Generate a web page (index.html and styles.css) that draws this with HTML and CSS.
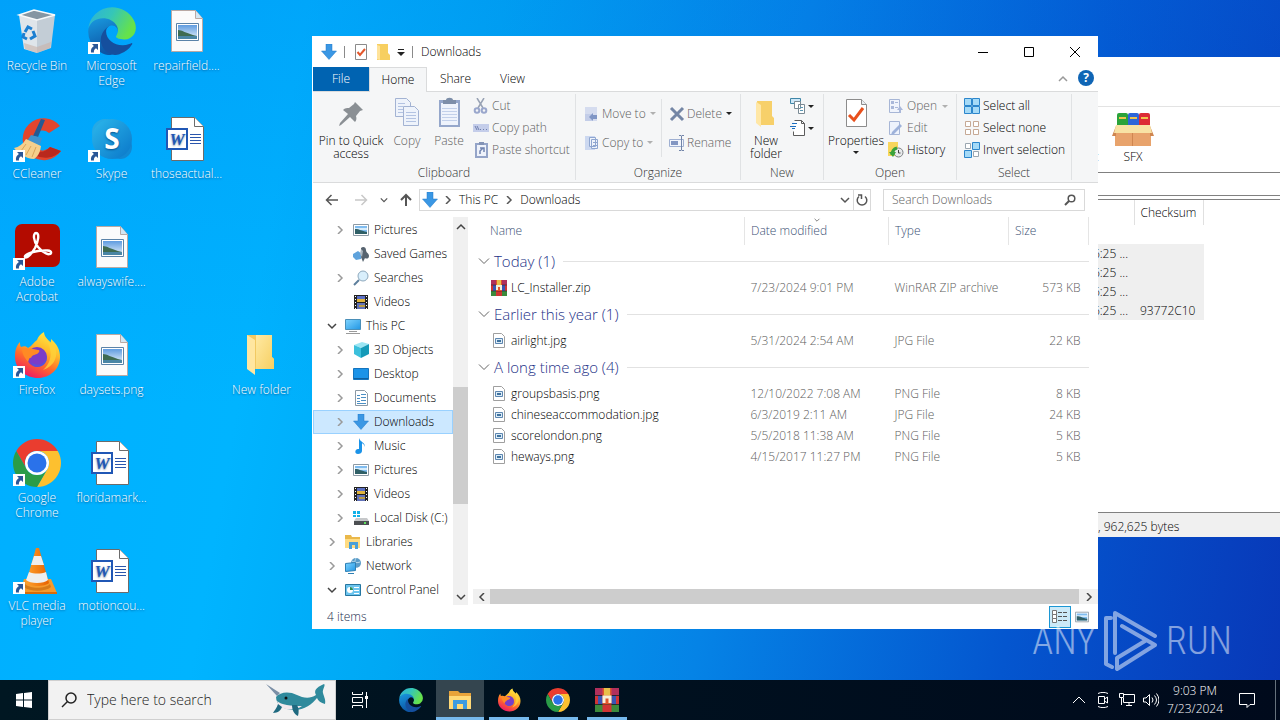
FILE: index.html
```html
<!DOCTYPE html>
<html lang="en">
<head>
    <meta charset="UTF-8">
    <meta name="viewport" content="width=device-width, initial-scale=1.0">
    <title>Downloads</title>
    <link rel="stylesheet" href="styles.css">
</head>
<body>
    <!-- Icon sprite -->
    <svg class="sprite" aria-hidden="true">
        <defs>
            <linearGradient id="gEdgeGreen" x1="0" y1="0" x2="1" y2="0.4">
                <stop offset="0" stop-color="#2bb0dd"/><stop offset=".5" stop-color="#35c6b8"/><stop offset="1" stop-color="#66e24a"/>
            </linearGradient>
            <linearGradient id="gEdgeBlue" x1="0" y1="0" x2="0.3" y2="1">
                <stop offset="0" stop-color="#1a9de2"/><stop offset="1" stop-color="#0c55a5"/>
            </linearGradient>
            <linearGradient id="gFox" x1="0.8" y1="0" x2="0.3" y2="1">
                <stop offset="0" stop-color="#fff14a"/><stop offset=".35" stop-color="#ffbd2b"/><stop offset=".65" stop-color="#ff6a2b"/><stop offset="1" stop-color="#ec1668"/>
            </linearGradient>
            <linearGradient id="gFolder" x1="0" y1="0" x2="1" y2="1">
                <stop offset="0" stop-color="#ffe9a2"/><stop offset="1" stop-color="#f6cf62"/>
            </linearGradient>
            <linearGradient id="gSkype" x1="0" y1="0" x2="1" y2="1">
                <stop offset="0" stop-color="#2cb8ec"/><stop offset="1" stop-color="#0a76c8"/>
            </linearGradient>
            <linearGradient id="gSky" x1="0" y1="0" x2="0" y2="1">
                <stop offset="0" stop-color="#5f9ce0"/><stop offset="1" stop-color="#e4f0fa"/>
            </linearGradient>
            <linearGradient id="gCone" x1="0" y1="0" x2="1" y2="0">
                <stop offset="0" stop-color="#ffa02c"/><stop offset="1" stop-color="#e76200"/>
            </linearGradient>
            <linearGradient id="gScreen" x1="0" y1="0" x2="1" y2="1">
                <stop offset="0" stop-color="#7fd4ff"/><stop offset="1" stop-color="#2196e4"/>
            </linearGradient>
        </defs>

        <symbol id="shortcut" viewBox="0 0 12 12">
            <path fill="#fff" d="M0 0h12v12H0z"/>
            <path fill="#2b5797" d="M4 2h6v6L8 6.200C6.500 7 5.500 8.500 6 10.500H3C2.500 7.500 3.800 5.500 5.900 4.100z"/>
        </symbol>

        <symbol id="recycle" viewBox="0 0 48 48">
            <path fill="#dfe5ea" d="M6 8l5 34 13 4V12z"/>
            <path fill="#c3cdd6" d="M24 12l18-4-4 33-14 5z"/>
            <path fill="#8596a3" d="M6 8l15-5 21 5-18 5z"/>
            <path fill="none" stroke="#f8fafb" stroke-width="1.500" d="M6 8l15-5 21 5-18 5z"/>
            <path fill="#c9b3a8" opacity=".6" d="M11 36l13 4 14-5-1 6-13 5-12-4z"/>
            <g fill="none" stroke="#1c7fd1" stroke-width="3">
                <path d="M12 25l3-5 4 2"/><path d="M20 24l2 5-5 3"/><path d="M14 32l-4-2 1-4"/>
            </g>
        </symbol>

        <symbol id="edge" viewBox="4 1 257 258">
            <path fill="#154f9e" d="M235.680 195.460a93.730 93.730 0 0 1-10.540 4.710 101.870 101.870 0 0 1-35.900 6.460c-47.320 0-88.540-32.550-88.540-74.320A31.480 31.480 0 0 1 117.130 105c-42.800 1.800-53.800 46.400-53.800 72.530 0 73.880 68.090 81.370 82.760 81.370 7.910 0 19.840-2.300 27-4.560l1.310-.44a128.340 128.340 0 0 0 66.600-52.800 4 4 0 0 0-5.320-5.640z"/>
            <path fill="url(#gEdgeBlue)" d="M110.340 246.340A79.200 79.200 0 0 1 87.600 225a80.720 80.720 0 0 1 29.530-120c3.120-1.470 8.450-4.130 15.540-4a32.350 32.350 0 0 1 25.690 13 31.880 31.880 0 0 1 6.360 18.660c0-.21 24.460-79.600-80-79.600-43.900 0-80 41.660-80 78.210a130.150 130.150 0 0 0 12.110 56 128 128 0 0 0 156.380 67.110 75.550 75.550 0 0 1-62.780-8z"/>
            <path fill="url(#gEdgeGreen)" d="M156.940 153.780c-.81 1.050-3.300 2.500-3.300 5.660 0 2.610 1.700 5.120 4.720 7.230 14.380 10 41.490 8.680 41.560 8.680a59.560 59.560 0 0 0 30.270-8.350 61.380 61.380 0 0 0 30.430-52.880c.26-22.410-8-37.310-11.340-43.910C228.090 28.760 182.350 1.710 132.610 1.710A128 128 0 0 0 4.630 127.830c.48-36.540 36.800-66.050 80-66.050 3.500 0 23.460.34 42 10.070 16.340 8.580 24.900 18.940 30.850 29.210 6.180 10.670 7.280 24.150 7.280 29.520s-2.740 13.330-7.820 23.200z"/>
        </symbol>

        <symbol id="image-file" viewBox="0 0 48 48">
            <path fill="#fbfbfb" stroke="#b9a9a4" d="M8.500 3.500h24l7 8v33h-31z"/>
            <path fill="#d4e6f2" stroke="#b9a9a4" d="M32.500 3.500v8h7"/>
            <path fill="#fff" stroke="#5b83a8" d="M13.500 16.500h22v17h-22z"/>
            <path fill="url(#gSky)" d="M15 18h19v14H15z"/>
            <path fill="#3e6b52" d="M15 23c4 0 7 3 19 6H15z"/>
            <path fill="#4a86a5" d="M15 29h19v3H15z"/>
        </symbol>

        <symbol id="word-file" viewBox="0 0 48 48">
            <path fill="#fff" stroke="#6b6b6b" d="M8.500 2.500h23l9 9v34h-32z"/>
            <path fill="#fff" stroke="#6b6b6b" d="M31.500 2.500v9h9"/>
            <path stroke="#2a56ad" d="M27 19.500h11M27 22.500h11M27 25.500h11M27 28.500h11"/>
            <path fill="#fff" stroke="#2057b5" stroke-width="2" d="M4 14h20v20H4z"/>
        </symbol>

        <symbol id="ccleaner" viewBox="0 0 48 48">
            <path fill="#e2452e" d="M47 11A21 21 0 1 0 48 36l-11-4a10 10 0 1 1-1-14z"/>
            <path fill="#b9281d" d="M22 40a21 21 0 0 0 26-4l-11-4c-4 4-8 6-13 4z"/>
            <path fill="#245a94" d="M28 4l4 1-7 17-5-1z"/>
            <path fill="#3f93cf" d="M18 20l11 3-2 7-13-4z"/>
            <path fill="#f5cf8c" d="M13 24l15 7c-1 8-4 11-7 13C13 44 5 38 1 33c5-1 9-4 12-9z"/>
            <path stroke="#d9a45a" fill="none" d="M13 29l-5 7M18 31l-5 9M23 32l-4 10"/>
        </symbol>

        <symbol id="skype" viewBox="0 0 48 48">
            <circle cx="17" cy="17" r="13" fill="#27a9e4"/>
            <circle cx="32" cy="32" r="12" fill="#1288d2"/>
            <circle cx="24" cy="24" r="20" fill="url(#gSkype)"/>
        </symbol>

        <symbol id="acrobat" viewBox="0 0 48 48">
            <rect x="2" y="1" width="45" height="43" rx="7" fill="#b30b00"/>
            <path fill="none" stroke="#fff" stroke-width="2.400" d="M23 10c4 0 2 9-1 15-4 7-9 11-10 9s6-5 13-6 14-1 13 2-8 0-13-6-5-14-2-14z"/>
        </symbol>

        <symbol id="firefox" viewBox="0 0 48 48">
            <path fill="url(#gFox)" d="M7 11c0 2 0 4 1 5 3-1 5-1 7 1 4-2 6-6 9-8 1-3 3-6 7-8 0 5 5 8 6 11 1-1 1-2 1-4 6 5 9 11 9 18 0 12-10 21-22 21S2 38 2 26c0-6 1-11 5-15z"/>
            <circle cx="24" cy="26" r="10" fill="#7a3cc8"/>
            <path fill="#5a50d8" d="M18 31a9 9 0 0 0 15-9c3 8-2 14-9 14-3 0-5-2-6-5z"/>
            <path fill="#ff8a24" d="M9 18c6-2 12 0 16 1 2 0 2 2-1 4-3 1-5 1-6 4-2-1-2 2-3 4-3-4-6-8-6-13z"/>
            <path fill="#ffd23a" opacity=".8" d="M30 3c0 6 6 8 7 15 2 8-1 16-7 21 10-3 16-13 12-23-4-6-10-8-12-13z"/>
        </symbol>

        <symbol id="chrome" viewBox="0 0 48 48">
            <path fill="#ea3d2f" d="M3.220 12A24 24 0 0 1 44.780 12H24A12 12 0 0 0 13.600 30z"/>
            <path fill="#fdc02f" d="M44.780 12A24 24 0 0 1 24 48L34.400 30A12 12 0 0 0 24 12z"/>
            <path fill="#2a9c48" d="M24 48A24 24 0 0 1 3.220 12L13.600 30A12 12 0 0 0 34.400 30z"/>
            <circle cx="24" cy="24" r="12" fill="#fff"/>
            <circle cx="24" cy="24" r="9.500" fill="#2a72ea"/>
        </symbol>

        <symbol id="vlc" viewBox="0 0 48 48">
            <path fill="#f59a2c" d="M11 32h27l6 14H7z"/>
            <path fill="#d96c08" d="M7 45h37v2H7z"/>
            <path fill="#b85a06" opacity=".5" d="M12 37c5 5 20 5 25 0l1 3c-6 5-21 5-27 0z"/>
            <path fill="url(#gCone)" d="M23 1h3l10 35c-4 4-19 4-23 0z"/>
            <path fill="#eee" d="M21 9h7l3 9H18zM16 25c5 2 12 2 17 0l2 8c-4 4-18 4-22 0z"/>
        </symbol>

        <symbol id="folder-big" viewBox="0 0 48 48">
            <path fill="#f2c962" d="M9 4h25v22l2 2v10H12z"/>
            <path fill="url(#gFolder)" d="M18 4h16v22l2 2v10H18z"/>
            <path fill="#ffe6a0" d="M9 4l8 5v35l-8-6z"/>
        </symbol>

        <symbol id="down-arrow" viewBox="0 0 16 16">
            <path fill="#3a97e4" stroke="#2178c8" stroke-width=".5" d="M5 0h6v7h4.500L8 15.500.5 7H5z"/>
        </symbol>
        <symbol id="prop-small" viewBox="0 0 16 16">
            <path fill="#fff" stroke="#8a8a8a" d="M2.500.5h11v15h-11z"/>
            <path fill="none" stroke="#e4572c" stroke-width="2" d="M4.500 8l2.500 3 5-6"/>
        </symbol>
        <symbol id="folder" viewBox="0 0 16 16">
            <path fill="#f7cf60" d="M2 0h11v9l2 2v5H2z"/>
            <path fill="#ffe39a" d="M2 1l3 1v14l-3-1z"/>
        </symbol>
        <symbol id="folder-new" viewBox="0 0 32 32">
            <path fill="#f7d06a" d="M7 4h15v15l2 2v7H9z"/>
            <path fill="#ffe7a6" d="M6 5l5 3v22l-5-4z"/>
        </symbol>
        <symbol id="pin" viewBox="0 0 32 32">
            <path fill="#8a8f94" d="M20 5l8 8-3 1-4 5c1 3 0 5-1 6l-5-5-9 8-2 1 1-3 8-9-5-4c2-2 4-2 6-2l5-4z"/>
        </symbol>
        <symbol id="copy-big" viewBox="0 0 32 32">
            <g fill="#eef3fb" stroke="#a3b3d3"><path d="M4.500 1.500h11l4 4v14h-15z"/><path d="M12.500 9.500h11l4 4v15h-15z"/></g>
            <path stroke="#b3c3e2" fill="none" d="M7 6.500h7M7 9.500h5M7 12.500h5M7 15.500h5M15 15.500h10M15 18.500h10M15 21.500h10M15 24.500h10"/>
        </symbol>
        <symbol id="paste-big" viewBox="0 0 32 32">
            <path fill="#95a7cb" d="M6 3h21v27H6z"/>
            <path fill="#eef3fc" d="M8 6h17v22H8z"/>
            <path fill="#7d8ea9" d="M10 3h3c0-3 7-3 7 0h3v4H10z"/>
            <path stroke="#c2d0ea" d="M9 11.500h15M9 14.500h15M9 17.500h15M9 20.500h15M9 23.500h15"/>
        </symbol>
        <symbol id="cut" viewBox="0 0 16 16">
            <path fill="none" stroke="#98a2b4" stroke-width="1.500" d="M4 0l6 10M11 0L5 10"/>
            <g fill="none" stroke="#9aa7cc" stroke-width="2"><circle cx="4" cy="12.500" r="2.300"/><circle cx="11" cy="12.500" r="2.300"/></g>
        </symbol>
        <symbol id="path" viewBox="0 0 16 16">
            <path fill="#c4cdea" d="M0 4h16v8H0z"/>
            <path fill="none" stroke="#6f7fae" d="M2 6l2 4M4 6l2 4M7 9.500h1M10 9.500h1M13 9.500h1"/>
        </symbol>
        <symbol id="paste-link" viewBox="0 0 16 16">
            <path fill="#eef2fb" stroke="#94a4c8" stroke-width="2" d="M3 2h11v13H3z"/>
            <path fill="#8393b5" d="M6 0h5v3H6z"/>
            <path fill="none" stroke="#7184b0" stroke-width="1.500" d="M7 12V9l3-3M7 6h4v4"/>
        </symbol>
        <symbol id="move-to" viewBox="0 0 16 16">
            <path fill="#d5dcef" d="M1 1h12v14H1z"/><path fill="#c3cde8" d="M1 8h7v7H1z"/>
            <path fill="#8096c5" d="M5 11l4-4v2h4v4H9v2z"/>
        </symbol>
        <symbol id="copy-to" viewBox="0 0 16 16">
            <path fill="#ccd8f0" d="M1 1h10v14H1z"/>
            <path fill="#eef3fb" stroke="#8fa6d0" d="M5.500 2.500h6v9h-6zM7.500 4.500h6v9h-6z"/>
            <path stroke="#8fa6d0" d="M9 7.500h4M9 10.500h4"/>
        </symbol>
        <symbol id="delete" viewBox="0 0 16 16">
            <path stroke="#7486a5" stroke-width="3" d="M2 2l12 12M14 2L2 14"/>
        </symbol>
        <symbol id="rename" viewBox="0 0 16 16">
            <path fill="#f2f5fc" stroke="#9fb0d2" d="M.5 4.500h14v7H.5z"/>
            <path fill="#8296c2" d="M2 6h7v4H2z"/>
            <path fill="none" stroke="#7184a8" d="M10 .5h2l.5 1 .5-1h2M12.500 1v14M10 15.500h2l.5-1 .5 1h2"/>
        </symbol>
        <symbol id="new-item" viewBox="0 0 16 16">
            <path fill="#cfe8f8" stroke="#3f86a8" d="M.5.500h10v5H.5z"/>
            <path fill="#fff" stroke="#7a8a94" d="M4.500 3.500h6v7h-6zM8.500 6.500h6v9h-6z"/>
            <path stroke="#5b97b4" d="M10 9.500h3M10 12.500h3"/>
        </symbol>
        <symbol id="easy" viewBox="0 0 16 16">
            <path fill="#fff" stroke="#5c5c5c" d="M4.500.500h7l3 3v12h-11v-4"/>
            <path fill="none" stroke="#5c5c5c" d="M11.500.500v3h3"/>
            <path stroke="#1d6fc0" d="M2 3.500h5M0 6.500h6M2 8.500h3"/>
        </symbol>
        <symbol id="prop-big" viewBox="0 0 32 32">
            <path fill="#fff" stroke="#8c8c8c" d="M6.500 2.500h15l5 5v22h-20z"/>
            <path fill="#e9eef2" stroke="#8c8c8c" d="M21.500 2.500v5h5"/>
            <path fill="none" stroke="#e8501c" stroke-width="3" d="M9 18l5 5 9-12"/>
        </symbol>
        <symbol id="open" viewBox="0 0 16 16">
            <path fill="#f0f4fc" stroke="#a7b6d6" d="M1.500 1.500h10v13h-10z"/>
            <path fill="#a9b8da" d="M3 3h3v3H3zM3 8h3v3H3zM7 4h3v1H7zM7 9h3v1H7zM9 12l3-4 3 4h-2v3h-2v-3z"/>
        </symbol>
        <symbol id="edit" viewBox="0 0 16 16">
            <path fill="#eef3fc" stroke="#a7b6d6" d="M1.500 1.500h10v13h-10z"/>
            <path fill="#9eb2da" d="M12 4l2 2-8 8-3 1 1-3z"/>
        </symbol>
        <symbol id="history" viewBox="0 0 16 16">
            <path fill="#f8d65c" d="M0 0h10v14H0z"/>
            <circle cx="10.500" cy="10.500" r="4.500" fill="#e8eaec" stroke="#7c7f82"/>
            <path fill="none" stroke="#3aa33a" stroke-width="3" d="M4 13c0-4 1-6 5-7"/>
            <path fill="#3aa33a" d="M1 10h7l-3 5z"/>
            <path fill="none" stroke="#444" d="M10.500 8v3h2"/>
        </symbol>
        <symbol id="sel-all" viewBox="0 0 16 16">
            <path fill="#a5daf7" stroke="#2c86cc" d="M.5.5h7v7h-7zM8.500.5h7v7h-7zM.5 8.500h7v7h-7zM8.500 8.500h7v7h-7z"/>
        </symbol>
        <symbol id="sel-none" viewBox="0 0 16 16">
            <path fill="#fff" stroke="#c6a995" d="M1.500 1.500h5v5h-5zM9.500 1.500h5v5h-5zM1.500 9.500h5v5h-5zM9.500 9.500h5v5h-5z"/>
        </symbol>
        <symbol id="sel-inv" viewBox="0 0 16 16">
            <path fill="#a5daf7" stroke="#2c86cc" d="M8.500.5h7v7h-7zM.5 8.500h7v7h-7z"/>
            <path fill="#fff" stroke="#9aa6b0" d="M1.500 1.500h5v5h-5zM9.500 9.500h5v5h-5z"/>
        </symbol>

        <!-- Chevrons and arrows -->
        <symbol id="chev-right" viewBox="0 0 8 8"><path fill="none" stroke="currentColor" stroke-width="1.500" d="M2 0l4 4-4 4"/></symbol>
        <symbol id="chev-down" viewBox="0 0 10 10"><path fill="none" stroke="currentColor" stroke-width="1.500" d="M1 3l4 4 4-4"/></symbol>
        <symbol id="chev-thin" viewBox="0 0 12 12"><path fill="none" stroke="currentColor" d="M1 3.500l5 5 5-5"/></symbol>
        <symbol id="chev-up" viewBox="0 0 10 10"><path fill="none" stroke="currentColor" stroke-width="1.500" d="M1 7l4-4 4 4"/></symbol>
        <symbol id="arrow-left" viewBox="0 0 14 14"><path fill="none" stroke="currentColor" stroke-width="1.500" d="M6.500 2L1.500 7l5 5M1.500 7H13"/></symbol>
        <symbol id="arrow-right" viewBox="0 0 14 14"><path fill="none" stroke="currentColor" stroke-width="1.500" d="M7.500 2l5 5-5 5M12.500 7H1"/></symbol>
        <symbol id="arrow-up" viewBox="0 0 14 14"><path fill="none" stroke="currentColor" stroke-width="2" d="M2 7l5-5 5 5M7 2v11"/></symbol>
        <symbol id="magnifier" viewBox="0 0 16 16"><path fill="none" stroke="currentColor" stroke-width="1.500" d="M6.500 9.500L1 15"/><circle cx="10" cy="6" r="5" fill="none" stroke="currentColor" stroke-width="1.500"/></symbol>
        <symbol id="magnifier-bold" viewBox="0 0 12 12"><path fill="none" stroke="currentColor" stroke-width="2" d="M5 7l-4 4"/><circle cx="7.500" cy="4.500" r="3.300" fill="none" stroke="currentColor" stroke-width="1.500"/></symbol>

        <!-- Tree icons -->
        <symbol id="pictures" viewBox="0 0 16 16">
            <path fill="#fff" stroke="#8d9aa5" d="M.5 2.500h15v11H.5z"/>
            <path fill="#7fbcf0" d="M2 4h12v8H2z"/><path fill="#d6ecfb" d="M2 6h12v2H2z"/>
            <path fill="#2f5f66" d="M2 7c5 0 6 2 12 3v2H2z"/>
        </symbol>
        <symbol id="games" viewBox="0 0 16 16">
            <path fill="#5fa3dc" d="M0 8l5-3 4 3-1 5-5 1-3-3z"/>
            <path fill="#56636f" d="M8 2c2-2 5-1 5 2s3 3 3 6-3 3-4 2l-2 4-2-5z"/>
            <path fill="#aab6c0" d="M8 3l2 2-1 6-2-3z"/>
        </symbol>
        <symbol id="searches" viewBox="0 0 16 16">
            <circle cx="10" cy="6" r="5" fill="#d9effc" stroke="#8ea9bd"/>
            <path stroke="#5d7f9c" stroke-width="2" d="M6 10l-5 5"/>
        </symbol>
        <symbol id="videos" viewBox="0 0 16 16">
            <path fill="#222" d="M1 1h14v14H1z"/>
            <path fill="#5b6fc4" d="M4 2h8v6H4z"/><path fill="#e0b43c" d="M4 5h8v3H4z"/>
            <path fill="#6272b8" d="M4 9h8v6H4z"/><path fill="#b79b47" d="M6 11h6v2H6z"/>
            <path stroke="#fff" stroke-dasharray="1 2" d="M2.500 2v13M13.500 2v13"/>
        </symbol>
        <symbol id="pc" viewBox="0 0 16 16">
            <path fill="url(#gScreen)" stroke="#4a8fb8" d="M.5 1.500h15v10H.5z"/>
            <path stroke="#9a9a9a" d="M4 13.500h8M1 15.500h14"/>
        </symbol>
        <symbol id="objects" viewBox="0 0 16 16">
            <path fill="#9be5f3" d="M1 3l8-3 7 2-8 4z"/><path fill="#3cc0dc" d="M1 3l7 3v10l-7-4z"/><path fill="#149ab8" d="M8 6l8-4v10l-8 4z"/>
        </symbol>
        <symbol id="desktop" viewBox="0 0 16 16">
            <path fill="#1b93e8" stroke="#1474be" d="M.5 2.500h15v11H.5z"/><path fill="#0f5f9e" d="M1 12h14v1H1z"/>
        </symbol>
        <symbol id="documents" viewBox="0 0 16 16">
            <path fill="#fff" stroke="#8b99a5" d="M2.500.5h9l3 3v12h-12z"/>
            <path stroke="#4b8fc4" d="M4 5.500h3M4 8.500h3M4 11.500h3M8 4.500h5M8 7.500h5M8 10.500h5M4 13.500h9"/>
        </symbol>
        <symbol id="music" viewBox="0 0 16 16">
            <path fill="#1b93e8" d="M6 0c1 4 6 4 6 9-1-3-2-3-3-4v8c0 2-2 3-4 3-4 0-3-5 0-5h1z"/>
        </symbol>
        <symbol id="disk" viewBox="0 0 16 16">
            <path fill="#12b1e8" d="M0 1h3v3H0zM4 1h3v3H4zM0 5h3v2H0zM4 5h3v2H4z"/>
            <path fill="#c6c8ca" d="M3 8h11l2 3H1z"/><path fill="#4c4f52" d="M1 11h15v4H1z"/><path fill="#5fe05f" d="M11 12h2v2h-2z"/>
        </symbol>
        <symbol id="libraries" viewBox="0 0 16 16">
            <path fill="#eab84a" d="M0 1h6l1 2h8v11H0z"/><path fill="#ffdc82" d="M0 5h15v9H0z"/>
            <path fill="#4aa0d8" d="M4 8h9v7h-3v-4H7v4H4z"/>
        </symbol>
        <symbol id="network" viewBox="0 0 16 16">
            <circle cx="11" cy="5" r="5" fill="#5b9cc8"/><path fill="none" stroke="#bcdcef" d="M7 3c3 2 5 2 8 1M11 0c-2 4-1 7 0 10"/>
            <path fill="url(#gScreen)" stroke="#2d7fb4" d="M.5 5.500l10-1v8l-10 1z"/><path stroke="#2d7fb4" d="M3 15.500h6"/>
        </symbol>
        <symbol id="control" viewBox="0 0 16 16">
            <path fill="#6cc4ee" stroke="#2676a0" d="M.5 2.500h15v11H.5z"/>
            <circle cx="5" cy="8" r="3" fill="#fff"/><path fill="#2e8b57" d="M5 5v3h3a3 3 0 0 0-3-3z"/>
            <path stroke="#fff" d="M9 5.500h5M9 8.500h5M9 11.500h5"/>
        </symbol>
        <symbol id="img-small" viewBox="0 0 16 16">
            <path fill="#fff" stroke="#9f9f9f" d="M2.500.5h8l3 3v11h-11z"/>
            <path fill="#dcecf7" stroke="#5d86b0" d="M4.500 5.500h7v5h-7z"/><path fill="#3f729e" d="M6 7h4v2H6z"/>
        </symbol>
        <symbol id="winrar" viewBox="0 0 16 16">
            <path fill="#b0305c" d="M0 0h16v5H0z"/><path fill="#3a54b4" d="M0 5h16v6H0z"/><path fill="#3c8a3c" d="M0 11h16v5H0z"/>
            <path fill="#d03434" d="M0 5h2v6H0zM14 5h2v6h-2zM5 11h6v5H5z"/>
            <path stroke="#1c1c1c" stroke-width=".5" d="M0 5h16M0 11h16"/>
            <path fill="#e0562c" d="M5 0h6v11H5z"/><path fill="#e8c04a" d="M6 0h4v5H6z"/><path fill="#f5f0d8" d="M5 5h2v5H5zM9 5h2v5H9zM7 5h2v2H7z"/>
        </symbol>
        <symbol id="sfx" viewBox="0 0 42 34">
            <rect x="5" y="0" width="11" height="18" rx="2" fill="#2ba33a"/><rect x="16" y="0" width="11" height="18" rx="2" fill="#2e66d8"/><rect x="27" y="0" width="11" height="18" rx="2" fill="#dc2b35"/>
            <path fill="#f0c54d" d="M7 4h7v2H7zM18 4h7v2h-7zM29 4h7v2h-7z"/>
            <path fill="#e8a36c" d="M3 15h36v18H3z"/><path fill="#cf8650" d="M20 20h1v13h-1zM0 23l4-10v10zM42 23l-4-10v10z"/>
            <path fill="#f8e2a4" d="M4 12h34l2 8H2z"/>
        </symbol>

        <!-- Taskbar icons -->
        <symbol id="explorer" viewBox="0 0 24 24">
            <path fill="#e8a33a" d="M1 3h9l2 2h11v4H1z"/><path fill="#ffd977" d="M1 8h22v13H1z"/>
            <path fill="#3d9be0" d="M5 12h14v9h-4v-5H9v5H5z"/>
        </symbol>
        <symbol id="narwhal" viewBox="0 0 60 34">
            <path fill="#7b8fa6" d="M0 1l14 9-3 3z"/>
            <path fill="#2f8a9c" d="M10 14c4-5 13-6 21-2 6 3 13 4 19 0-2-4-1-7 8-11 2 1-2 6-1 9 1 4 3 7 2 11-4-1-7-3-8-6-5 6-12 12-23 12-10 0-18-5-18-13z"/>
            <path fill="#f2e9ee" d="M11 18c4 4 14 5 25 5-6 5-22 6-25-5z"/>
            <path fill="#1f6a80" d="M12 21c-1 4-4 7-5 9 5 0 8-3 9-6zM26 22c0 5 2 9 6 11 1-4 1-8-1-11z"/>
            <circle cx="20" cy="15" r="1.500" fill="#111"/>
        </symbol>
    </svg>

    <main class="desktop">
        <!-- Desktop shortcuts -->
        <section class="shortcuts" aria-label="Desktop icons">
            <a href="#" class="item c1 r1"><svg><use href="#recycle"/></svg><span>Recycle Bin</span></a>
            <a href="#" class="item c1 r2"><svg><use href="#ccleaner"/><use href="#shortcut" y="35" width="12" height="12"/></svg><span>CCleaner</span></a>
            <a href="#" class="item c1 r3"><svg><use href="#acrobat"/><use href="#shortcut" y="35" width="12" height="12"/></svg><span>Adobe Acrobat</span></a>
            <a href="#" class="item c1 r4"><svg><use href="#firefox"/><use href="#shortcut" y="35" width="12" height="12"/></svg><span>Firefox</span></a>
            <a href="#" class="item c1 r5"><svg><use href="#chrome"/><use href="#shortcut" y="35" width="12" height="12"/></svg><span>Google Chrome</span></a>
            <a href="#" class="item c1 r6"><svg><use href="#vlc"/><use href="#shortcut" y="35" width="12" height="12"/></svg><span>VLC media player</span></a>
            <a href="#" class="item c2 r1"><svg><use href="#edge"/><use href="#shortcut" y="35" width="12" height="12"/></svg><span>Microsoft Edge</span></a>
            <a href="#" class="item c2 r2"><svg><use href="#skype"/><text x="24" y="34" text-anchor="middle" class="glyph-skype">S</text><use href="#shortcut" y="35" width="12" height="12"/></svg><span>Skype</span></a>
            <a href="#" class="item c2 r3"><svg><use href="#image-file"/></svg><span>alwayswife....</span></a>
            <a href="#" class="item c2 r4"><svg><use href="#image-file"/></svg><span>daysets.png</span></a>
            <a href="#" class="item c2 r5"><svg><use href="#word-file"/><text x="14" y="30" text-anchor="middle" class="glyph-word">W</text></svg><span>floridamark...</span></a>
            <a href="#" class="item c2 r6"><svg><use href="#word-file"/><text x="14" y="30" text-anchor="middle" class="glyph-word">W</text></svg><span>motioncou...</span></a>
            <a href="#" class="item c3 r1"><svg><use href="#image-file"/></svg><span>repairfield....</span></a>
            <a href="#" class="item c3 r2"><svg><use href="#word-file"/><text x="14" y="30" text-anchor="middle" class="glyph-word">W</text></svg><span>thoseactual...</span></a>
            <a href="#" class="item c4 r4"><svg><use href="#folder-big"/></svg><span>New folder</span></a>
        </section>

        <!-- Archive window behind -->
        <section class="window archive" aria-label="Archive">
            <div class="archive-tools">
                <button class="archive-btn">Protect</button>
                <button class="archive-btn"><svg><use href="#sfx"/></svg>SFX</button>
            </div>
            <div class="archive-path"></div>
            <table class="archive-list">
                <thead><tr><th></th><th>Checksum</th></tr></thead>
                <tbody>
                    <tr><td>6:25 ...</td><td></td></tr>
                    <tr><td>6:25 ...</td><td></td></tr>
                    <tr><td>6:25 ...</td><td></td></tr>
                    <tr><td>6:25 ...</td><td>93772C10</td></tr>
                </tbody>
            </table>
            <footer class="archive-status">, 962,625 bytes</footer>
        </section>

        <!-- Explorer window -->
        <section class="window explorer" aria-label="Downloads">
            <header class="titlebar">
                <svg class="i16"><use href="#down-arrow"/></svg>
                <span class="sep"></span>
                <button aria-label="Properties"><svg class="i16"><use href="#prop-small"/></svg></button>
                <button aria-label="New folder"><svg class="i16"><use href="#folder"/></svg></button>
                <button aria-label="Customize" class="qat-more"><svg viewBox="0 0 8 8"><path stroke="#222" d="M1 1.500h6"/><path fill="#222" d="M0 4h8L4 8z"/></svg></button>
                <span class="sep"></span>
                <h1>Downloads</h1>
                <button class="win-btn" aria-label="Minimize"><svg class="i12" viewBox="0 0 12 12"><path stroke="#000" d="M1 6.500h10"/></svg></button>
                <button class="win-btn" aria-label="Maximize"><svg class="i12" viewBox="0 0 12 12"><path fill="none" stroke="#000" d="M1.500 1.500h9v9h-9z"/></svg></button>
                <button class="win-btn" aria-label="Close"><svg class="i12" viewBox="0 0 12 12"><path stroke="#000" d="M1 1l10 10M11 1L1 11"/></svg></button>
            </header>

            <nav class="tabs">
                <button class="tab file">File</button>
                <button class="tab active">Home</button>
                <button class="tab">Share</button>
                <button class="tab">View</button>
                <button class="collapse" aria-label="Collapse ribbon"><svg class="i10"><use href="#chev-up"/></svg></button>
                <button class="help" aria-label="Help">?</button>
            </nav>

            <div class="ribbon">
                <div class="group clipboard">
                    <div class="tools">
                        <button class="big wide"><svg><use href="#pin"/></svg>Pin to Quick access</button>
                        <button class="big narrow off"><svg><use href="#copy-big"/></svg>Copy</button>
                        <button class="big narrow off"><svg><use href="#paste-big"/></svg>Paste</button>
                        <div class="stack">
                            <button class="small off"><svg><use href="#cut"/></svg>Cut</button>
                            <button class="small off"><svg><use href="#path"/></svg>Copy path</button>
                            <button class="small off"><svg><use href="#paste-link"/></svg>Paste shortcut</button>
                        </div>
                    </div>
                    <div class="caption">Clipboard</div>
                </div>
                <div class="group organize">
                    <div class="tools">
                        <div class="stack two">
                            <button class="small off"><svg><use href="#move-to"/></svg>Move to<i class="tri pale"></i></button>
                            <button class="small off"><svg><use href="#copy-to"/></svg>Copy to<i class="tri pale"></i></button>
                        </div>
                        <div class="stack two split">
                            <button class="small off"><svg><use href="#delete"/></svg>Delete<i class="tri"></i></button>
                            <button class="small off"><svg><use href="#rename"/></svg>Rename</button>
                        </div>
                    </div>
                    <div class="caption">Organize</div>
                </div>
                <div class="group new">
                    <div class="tools">
                        <button class="big narrow"><svg><use href="#folder-new"/></svg>New folder</button>
                        <div class="stack">
                            <button class="small" aria-label="New item"><svg><use href="#new-item"/></svg><i class="tri"></i></button>
                            <button class="small" aria-label="Easy access"><svg><use href="#easy"/></svg><i class="tri"></i></button>
                        </div>
                    </div>
                    <div class="caption">New</div>
                </div>
                <div class="group open">
                    <div class="tools">
                        <button class="big medium"><svg><use href="#prop-big"/></svg>Properties<i class="tri"></i></button>
                        <div class="stack">
                            <button class="small off"><svg><use href="#open"/></svg>Open<i class="tri pale"></i></button>
                            <button class="small off"><svg><use href="#edit"/></svg>Edit</button>
                            <button class="small"><svg><use href="#history"/></svg>History</button>
                        </div>
                    </div>
                    <div class="caption">Open</div>
                </div>
                <div class="group select">
                    <div class="tools">
                        <div class="stack">
                            <button class="small"><svg><use href="#sel-all"/></svg>Select all</button>
                            <button class="small"><svg><use href="#sel-none"/></svg>Select none</button>
                            <button class="small"><svg><use href="#sel-inv"/></svg>Invert selection</button>
                        </div>
                    </div>
                    <div class="caption">Select</div>
                </div>
            </div>

            <div class="address-row">
                <button class="go" aria-label="Back"><svg class="i14"><use href="#arrow-left"/></svg></button>
                <button class="go dim" aria-label="Forward"><svg class="i14"><use href="#arrow-right"/></svg></button>
                <button class="recent" aria-label="Recent locations"><svg class="i8"><use href="#chev-down"/></svg></button>
                <button class="up" aria-label="Up"><svg class="i14"><use href="#arrow-up"/></svg></button>
                <nav class="address">
                    <svg class="i16"><use href="#down-arrow"/></svg>
                    <svg class="i8"><use href="#chev-right"/></svg>
                    <a href="#">This PC</a>
                    <svg class="i8"><use href="#chev-right"/></svg>
                    <a href="#">Downloads</a>
                    <button class="drop" aria-label="Previous locations"><svg class="i10"><use href="#chev-down"/></svg></button>
                    <button class="refresh" aria-label="Refresh"><svg class="i14" viewBox="0 0 14 14"><path fill="none" stroke="#555" stroke-width="1.500" d="M4 3.500A4.800 4.800 0 1 0 10 3.500"/><path fill="none" stroke="#555" stroke-width="1.500" d="M3 2h3.500v4"/></svg></button>
                </nav>
                <label class="search">
                    <input type="text" placeholder="Search Downloads" aria-label="Search Downloads">
                    <svg class="i12"><use href="#magnifier-bold"/></svg>
                </label>
            </div>

            <div class="panes">
                <ul class="tree">
                    <li><a href="#" class="sub"><svg class="exp"><use href="#chev-right"/></svg><svg class="i16"><use href="#pictures"/></svg>Pictures</a></li>
                    <li><a href="#" class="sub"><svg class="exp"></svg><svg class="i16"><use href="#games"/></svg>Saved Games</a></li>
                    <li><a href="#" class="sub"><svg class="exp"><use href="#chev-right"/></svg><svg class="i16"><use href="#searches"/></svg>Searches</a></li>
                    <li><a href="#" class="sub"><svg class="exp"></svg><svg class="i16"><use href="#videos"/></svg>Videos</a></li>
                    <li><a href="#"><svg class="exp opened"><use href="#chev-down"/></svg><svg class="i16"><use href="#pc"/></svg>This PC</a></li>
                    <li><a href="#" class="sub"><svg class="exp"><use href="#chev-right"/></svg><svg class="i16"><use href="#objects"/></svg>3D Objects</a></li>
                    <li><a href="#" class="sub"><svg class="exp"><use href="#chev-right"/></svg><svg class="i16"><use href="#desktop"/></svg>Desktop</a></li>
                    <li><a href="#" class="sub"><svg class="exp"><use href="#chev-right"/></svg><svg class="i16"><use href="#documents"/></svg>Documents</a></li>
                    <li><a href="#" class="sub selected"><svg class="exp"><use href="#chev-right"/></svg><svg class="i16"><use href="#down-arrow"/></svg>Downloads</a></li>
                    <li><a href="#" class="sub"><svg class="exp"><use href="#chev-right"/></svg><svg class="i16"><use href="#music"/></svg>Music</a></li>
                    <li><a href="#" class="sub"><svg class="exp"><use href="#chev-right"/></svg><svg class="i16"><use href="#pictures"/></svg>Pictures</a></li>
                    <li><a href="#" class="sub"><svg class="exp"><use href="#chev-right"/></svg><svg class="i16"><use href="#videos"/></svg>Videos</a></li>
                    <li><a href="#" class="sub"><svg class="exp"><use href="#chev-right"/></svg><svg class="i16"><use href="#disk"/></svg>Local Disk (C:)</a></li>
                    <li><a href="#"><svg class="exp"><use href="#chev-right"/></svg><svg class="i16"><use href="#libraries"/></svg>Libraries</a></li>
                    <li><a href="#"><svg class="exp"><use href="#chev-right"/></svg><svg class="i16"><use href="#network"/></svg>Network</a></li>
                    <li><a href="#"><svg class="exp opened"><use href="#chev-down"/></svg><svg class="i16"><use href="#control"/></svg>Control Panel</a></li>
                </ul>
                <div class="vscroll">
                    <button aria-label="Scroll up"><svg class="i10"><use href="#chev-up"/></svg></button>
                    <div class="track"><div class="thumb"></div></div>
                    <button aria-label="Scroll down"><svg class="i10"><use href="#chev-down"/></svg></button>
                </div>

                <div class="content">
                    <table class="files">
                        <colgroup><col><col class="col-date"><col class="col-type"><col class="col-size"></colgroup>
                        <thead>
                            <tr><th>Name</th><th class="sorted">Date modified<svg class="sort"><use href="#chev-down"/></svg></th><th>Type</th><th>Size</th></tr>
                        </thead>
                        <tbody>
                            <tr class="heading"><th colspan="4"><div><svg class="i12"><use href="#chev-thin"/></svg>Today (1)</div></th></tr>
                            <tr><td><div><svg class="i16"><use href="#winrar"/></svg>LC_Installer.zip</div></td><td>7/23/2024 9:01 PM</td><td>WinRAR ZIP archive</td><td>573 KB</td></tr>
                        </tbody>
                        <tbody>
                            <tr class="heading"><th colspan="4"><div><svg class="i12"><use href="#chev-thin"/></svg>Earlier this year (1)</div></th></tr>
                            <tr><td><div><svg class="i16"><use href="#img-small"/></svg>airlight.jpg</div></td><td>5/31/2024 2:54 AM</td><td>JPG File</td><td>22 KB</td></tr>
                        </tbody>
                        <tbody>
                            <tr class="heading"><th colspan="4"><div><svg class="i12"><use href="#chev-thin"/></svg>A long time ago (4)</div></th></tr>
                            <tr><td><div><svg class="i16"><use href="#img-small"/></svg>groupsbasis.png</div></td><td>12/10/2022 7:08 AM</td><td>PNG File</td><td>8 KB</td></tr>
                            <tr><td><div><svg class="i16"><use href="#img-small"/></svg>chineseaccommodation.jpg</div></td><td>6/3/2019 2:11 AM</td><td>JPG File</td><td>24 KB</td></tr>
                            <tr><td><div><svg class="i16"><use href="#img-small"/></svg>scorelondon.png</div></td><td>5/5/2018 11:38 AM</td><td>PNG File</td><td>5 KB</td></tr>
                            <tr><td><div><svg class="i16"><use href="#img-small"/></svg>heways.png</div></td><td>4/15/2017 11:27 PM</td><td>PNG File</td><td>5 KB</td></tr>
                        </tbody>
                    </table>
                    <div class="hscroll">
                        <button aria-label="Scroll left"><svg class="i8 flip"><use href="#chev-right"/></svg></button>
                        <div class="thumb"></div>
                        <button aria-label="Scroll right"><svg class="i8"><use href="#chev-right"/></svg></button>
                    </div>
                </div>
            </div>

            <footer class="status">
                <span>4 items</span>
                <button class="view on" aria-label="Details view"><svg viewBox="0 0 18 16"><path fill="#fff" stroke="#777" d="M1.500 1.500h4v4h-4zM1.500 5.500h4v4h-4zM1.500 9.500h4v4h-4z"/><path stroke="#555" stroke-dasharray="4 1" d="M7 3.500h10M7 7.500h10M7 11.500h10"/></svg></button>
                <button class="view" aria-label="Large icons view"><svg><use href="#pictures"/></svg></button>
            </footer>
        </section>

        <!-- Watermark -->
        <div class="watermark">
            <span>ANY</span>
            <svg viewBox="0 0 56 62"><path fill="none" stroke="#fff" stroke-width="4" stroke-linejoin="round" stroke-linecap="round" d="M12 43V3l40 23M19 16l33 19L14 59V48l28-17M8 8H3v46l6 3"/></svg>
            <span>RUN</span>
        </div>
    </main>

    <footer class="taskbar">
        <button class="start" aria-label="Start"><svg class="i16" viewBox="0 0 16 16"><path fill="#fff" d="M0 2l7-1v6.500H0zM8 1l8-1v7.500H8zM0 8.500h7V15l-7-1zM8 8.500h8V16l-8-1z"/></svg></button>
        <label class="task-search">
            <svg class="i16"><use href="#magnifier"/></svg>
            <input type="text" placeholder="Type here to search" aria-label="Type here to search">
            <svg class="narwhal"><use href="#narwhal"/></svg>
        </label>
        <button class="app" aria-label="Task view"><svg class="i18" viewBox="0 0 18 18"><path fill="none" stroke="#fff" d="M1.500 1v2.500h10V1M1.500 6.500h10v5h-10zM1.500 17v-2.500h10V17M15.500 1v16"/><path fill="#fff" d="M14 5h3v3h-3z"/></svg></button>
        <div class="apps">
            <button class="app" aria-label="Microsoft Edge"><svg class="i24"><use href="#edge"/></svg></button>
            <button class="app running current" aria-label="File Explorer"><svg class="i24"><use href="#explorer"/></svg></button>
            <button class="app running" aria-label="Firefox"><svg class="i24"><use href="#firefox"/></svg></button>
            <button class="app running" aria-label="Google Chrome"><svg class="i24"><use href="#chrome"/></svg></button>
            <button class="app running" aria-label="WinRAR"><svg class="i24"><use href="#winrar"/></svg></button>
        </div>
        <div class="tray">
            <button aria-label="Show hidden icons"><svg class="i16" viewBox="0 0 16 16"><path fill="none" stroke="#fff" d="M2 11l6-6 6 6"/></svg></button>
            <button aria-label="Meet Now"><svg class="i16" viewBox="0 0 16 16"><path fill="none" stroke="#fff" d="M3 1.500c3-1.500 7-1.500 10 0M3 14.500c3 1.500 7 1.500 10 0M3.500 4.500h6v7h-6zM9.500 7l3-2v6l-3-2z"/></svg></button>
            <button aria-label="Network"><svg class="i16" viewBox="0 0 16 16"><path fill="none" stroke="#fff" d="M.5 1.500h4v4h-4zM5 2.500h10.500v8H4.500V6M2.500 6v7M7 13.500h6M10 11v2"/></svg></button>
            <button aria-label="Volume"><svg class="i16" viewBox="0 0 16 16"><path fill="none" stroke="#fff" d="M.5 6v4H3l3.500 3.500v-11L3 6zM9 5.500q2 2.500 0 5M11.500 3.500q4 4.500 0 9M13.500 1.500q5 6.500 0 13"/></svg></button>
            <time datetime="2024-07-23T21:03">9:03 PM<br>7/23/2024</time>
            <button class="notify" aria-label="Notifications"><svg class="i16" viewBox="0 0 16 16"><path fill="none" stroke="#fff" d="M.5 1.500h15v11H11l-3 3v-3H.5z"/></svg></button>
            <button class="peek" aria-label="Show desktop"></button>
        </div>
    </footer>
</body>
</html>
```
FILE: styles.css
```css
* {
    box-sizing: border-box;
}

body {
    margin: 0;
    height: 100vh;
    display: flex;
    flex-direction: column;
    overflow: hidden;
    font-family: "Open Sans", "Noto Sans", sans-serif;
    font-size: 12px;
    font-weight: 350;
    line-height: 16px;
    color: #000;
}

button {
    margin: 0;
    padding: 0;
    border: 0;
    background: none;
    font: inherit;
    color: inherit;
    display: flex;
    align-items: center;
    justify-content: center;
}

input {
    font: inherit;
    border: 0;
    padding: 0;
    min-width: 0;
    flex: 1;
    background: none;
    outline: none;
}

a {
    color: inherit;
    text-decoration: none;
}

svg {
    flex: none;
    display: block;
}

.sprite {
    position: absolute;
    width: 0;
    height: 0;
}

.i8 { width: 8px; height: 8px; }
.i10 { width: 10px; height: 10px; }
.i12 { width: 12px; height: 12px; }
.i14 { width: 14px; height: 14px; }
.i16 { width: 16px; height: 16px; }
.i18 { width: 18px; height: 18px; }
.i24 { width: 24px; height: 24px; }

.glyph-word {
    font: italic bold 17px "Liberation Serif", serif;
    fill: #2057b5;
}

.glyph-skype {
    font: bold 28px "Open Sans", sans-serif;
    fill: #fff;
}

/* Desktop */
.desktop {
    flex: 1;
    position: relative;
    overflow: hidden;
    background:
        linear-gradient(180deg, rgba(0, 110, 230, .2), rgba(0, 110, 230, 0) 60%),
        linear-gradient(100deg, #00aeff 0%, #00b4ff 22%, #00a8f4 36%, #0583e6 58%, #0456cf 80%, #0838b8 100%);
}

.shortcuts {
    display: grid;
    grid-template-columns: 74px repeat(3, 75px);
    grid-template-rows: repeat(6, 108px);
    padding-top: 7px;
}

.item {
    display: flex;
    flex-direction: column;
    align-items: center;
    gap: 3px;
    line-height: 15px;
    text-align: center;
    color: #fff;
    text-shadow: 0 1px 2px rgba(0, 40, 90, .6);
}

.item svg {
    width: 48px;
    height: 48px;
}

.c1 { grid-column: 1; }
.c2 { grid-column: 2; }
.c3 { grid-column: 3; }
.c4 { grid-column: 4; }
.r1 { grid-row: 1; }
.r2 { grid-row: 2; }
.r3 { grid-row: 3; }
.r4 { grid-row: 4; }
.r5 { grid-row: 5; }
.r6 { grid-row: 6; }

.window {
    position: absolute;
    display: flex;
    flex-direction: column;
    background: #fff;
}

/* Archive window */
.archive {
    top: 57px;
    bottom: 143px;
    right: 0;
    width: 260px;
}

.archive-tools {
    display: flex;
    align-items: flex-end;
    height: 116px;
    padding: 0 0 7px 38px;
    border-bottom: 1px solid #808080;
    background: linear-gradient(#e3e3e3, #e3e3e3) 0 49px / 100% 1px no-repeat;
}

.archive-btn {
    flex-direction: column;
    gap: 2px;
    width: 42px;
    margin-right: 12px;
}

.archive-btn svg {
    width: 42px;
    height: 34px;
}

.archive-path {
    height: 27px;
    border-bottom: 1px solid #808080;
    background: linear-gradient(#808080, #808080) 0 22px / 100% 1px no-repeat;
}

.archive-list {
    width: 184px;
    border-collapse: collapse;
    table-layout: fixed;
}

.archive-list th {
    height: 25px;
    padding: 1px 0 0 6px;
    font-weight: inherit;
    text-align: left;
    border-right: 1px solid #e0e0e0;
}

.archive-list th:first-child {
    width: 114px;
}

.archive-list tbody::before {
    content: "";
    display: block;
    height: 19px;
}

.archive-list td {
    height: 19px;
    padding: 0 6px;
    background: #efefef;
}

.archive-list td:first-child {
    text-align: right;
}

.archive-status {
    margin-top: auto;
    height: 25px;
    padding: 6px 0 0 78px;
    border-top: 1px solid #808080;
    background: #f0f0f0;
}

/* Explorer window */
.explorer {
    top: 36px;
    bottom: 51px;
    left: 312px;
    right: 182px;
    padding-left: 1px;
    overflow: hidden;
}

.titlebar {
    display: flex;
    align-items: center;
    height: 31px;
    padding-left: 8px;
}

.titlebar .sep {
    width: 1px;
    height: 12px;
    margin: 0 8px 0 7px;
    background: #8a8a8a;
}

.titlebar button + button {
    margin-left: 6px;
}

.titlebar .qat-more svg {
    width: 8px;
    height: 8px;
}

.titlebar h1 {
    flex: 1;
    margin: 0;
    font-size: 12px;
    font-weight: inherit;
}

.titlebar .win-btn {
    width: 46px;
    height: 31px;
    margin: 0;
}

.tabs {
    display: flex;
    height: 24px;
    padding-right: 4px;
}

.tab {
    width: 57px;
}

.tab.file {
    width: 56px;
    background: #0063b1;
    color: #fff;
}

.tab.active {
    width: 58px;
    height: 25px;
    z-index: 1;
    background: #f5f6f7;
    border: 1px solid #dadbdc;
    border-bottom: 0;
}

.collapse {
    margin-left: auto;
    width: 28px;
    color: #999;
}

.help {
    width: 16px;
    height: 16px;
    margin: 3px 0 0 1px;
    border-radius: 50%;
    background: #0f65b5;
    color: #fff;
    font-weight: bold;
}

.ribbon {
    display: flex;
    height: 92px;
    background: #f5f6f7;
    border-top: 1px solid #dadbdc;
    border-bottom: 1px solid #dadbdc;
}

.group {
    display: flex;
    flex-direction: column;
    margin: 2px 0;
    border-right: 1px solid #e0e2e4;
}

.clipboard { width: 263px; }
.organize { width: 165px; }
.new { width: 83px; }
.open { width: 133px; }
.select { width: 115px; }

.tools {
    display: flex;
    flex: 1;
}

.caption {
    height: 15px;
    text-align: center;
    color: #333;
}

.big {
    flex-direction: column;
    justify-content: flex-start;
    padding-top: 3px;
    line-height: 13px;
}

.big svg {
    width: 32px;
    height: 32px;
    margin-bottom: 5px;
}

.big .tri {
    margin-top: 4px;
}

.wide { width: 70px; margin-left: 3px; }
.narrow { width: 42px; }
.medium { width: 52px; }

.stack {
    display: flex;
    flex-direction: column;
    justify-content: flex-start;
    padding: 1px 0 0;
}

.stack.two {
    width: 85px;
    padding: 5px 0 0 8px;
}

.stack.split {
    width: auto;
    margin: 5px 0 8px;
    padding: 0 0 0 7px;
    border-left: 1px solid #e0e2e4;
}

.small {
    height: 22px;
    justify-content: flex-start;
    gap: 3px;
    white-space: nowrap;
}

.two .small {
    height: 29px;
}

.small svg {
    width: 16px;
    height: 16px;
}

.clipboard .stack { margin-left: 3px; }
.organize .small { gap: 2px; }
.new .big { margin-left: 4px; }
.new .stack { margin-left: 3px; }
.open .big { margin-left: 6px; }
.open .stack { margin-left: 6px; }
.select .stack { margin-left: 7px; }

.off {
    color: #606060;
}

.tri {
    border: 3px solid transparent;
    border-top-color: #222;
    border-bottom: 0;
}

.two .tri {
    margin-left: 2px;
}

.open .small .tri {
    margin-left: 2px;
}

.new .small {
    gap: 2px;
}

.tri.pale {
    border-top-color: #b0b0b0;
}

/* Address row */
.address-row {
    display: flex;
    align-items: center;
    height: 34px;
    padding: 0 13px 0 4px;
    color: #555;
}

.go {
    width: 29px;
}

.dim {
    color: #c8c8c8;
}

.recent {
    width: 18px;
}

.up {
    width: 26px;
}

.address {
    flex: 1;
    display: flex;
    align-items: center;
    height: 22px;
    padding-left: 2px;
    border: 1px solid #d9d9d9;
}

.address a {
    color: #000;
    margin: 0 7px;
}

.address .i16 {
    margin-right: 6px;
}

.drop {
    margin-left: auto;
    width: 17px;
}

.refresh {
    width: 17px;
    height: 20px;
    border-left: 1px solid #d9d9d9;
}

.search {
    display: flex;
    align-items: center;
    width: 202px;
    height: 22px;
    margin-left: 12px;
    padding: 0 8px;
    border: 1px solid #d9d9d9;
}

.search input::placeholder {
    color: #606060;
    opacity: 1;
}

/* Panes */
.panes {
    flex: 1;
    min-height: 0;
    display: flex;
}

.tree {
    width: 140px;
    margin: 0;
    padding: 1px 0 0;
    list-style: none;
    overflow: hidden;
}

.tree a {
    display: flex;
    align-items: center;
    height: 24px;
    padding-left: 14px;
    border: 1px solid transparent;
    white-space: nowrap;
}

.tree .sub {
    padding-left: 22px;
}

.tree .selected {
    background: #cce8ff;
    border-color: #99d1ff;
}

.tree .i16 {
    margin: 0 5px 0 9px;
}

.exp {
    width: 8px;
    height: 8px;
    color: #9a9a9a;
}

.exp.opened {
    width: 10px;
    height: 10px;
    margin: 0 -1px;
    color: #444;
}

.vscroll {
    width: 15px;
    display: flex;
    flex-direction: column;
    padding-top: 2px;
    background: #f0f0f0;
    color: #444;
}

.vscroll button {
    height: 16px;
}

.vscroll .track {
    flex: 1;
    display: flex;
    flex-direction: column;
    padding: 152px 0 85px;
}

.thumb {
    flex: 1;
    background: #cdcdcd;
}

.content {
    flex: 1;
    min-width: 0;
    display: flex;
    flex-direction: column;
    padding-left: 5px;
}

.files {
    width: calc(100% - 9px);
    table-layout: fixed;
    border-collapse: collapse;
    color: #606060;
}

.col-date { width: 144px; }
.col-type { width: 120px; }
.col-size { width: 80px; }

.files thead th {
    position: relative;
    height: 28px;
    padding: 0 6px;
    font-weight: inherit;
    text-align: left;
    color: #3c5175;
    border-right: 1px solid #e5e5e5;
}

.files thead th:first-child {
    padding-left: 17px;
}

.sort {
    position: absolute;
    top: 0;
    left: 68px;
    width: 8px;
    height: 6px;
    color: #777;
}

.files td {
    height: 21px;
    padding: 0 6px;
    white-space: nowrap;
}

.files td:first-child {
    padding-left: 18px;
    color: #000;
}

.files td:last-child {
    text-align: right;
    padding-right: 8px;
}

.files td div {
    display: flex;
    align-items: center;
    gap: 4px;
}

.heading th {
    height: 32px;
    padding: 0 0 0 5px;
}

.heading div {
    display: flex;
    align-items: center;
    gap: 4px;
    font-size: 15px;
    font-weight: 350;
    color: #1e3287;
}

.heading svg {
    color: #666;
}

.heading div::after {
    content: "";
    flex: 1;
    height: 1px;
    margin-left: 4px;
    background: #e2e2e2;
}

.hscroll {
    display: flex;
    height: 15px;
    margin: auto 0 1px;
    background: #f0f0f0;
    color: #444;
}

.hscroll button {
    width: 19px;
}

.hscroll button:first-child {
    width: 17px;
}

.flip {
    transform: scaleX(-1);
}

.status {
    display: flex;
    align-items: center;
    height: 24px;
    padding: 0 5px 0 14px;
    color: #1a2c4c;
}

.status span {
    margin-right: auto;
}

.view {
    width: 22px;
    height: 22px;
}

.view svg {
    width: 14px;
    height: 14px;
}

.view.on {
    background: #cceaf8;
    border: 1px solid #1c97d4;
}

.view.on svg {
    width: 18px;
    height: 16px;
}

/* Watermark */
.watermark {
    position: absolute;
    right: 48px;
    bottom: 8px;
    display: flex;
    align-items: center;
    gap: 7px;
    font-family: "Roboto Condensed", "Open Sans Condensed", Roboto, sans-serif;
    font-size: 38px;
    font-weight: 300;
    line-height: 62px;
    color: #fff;
    opacity: .5;
}

.watermark svg {
    width: 56px;
    height: 62px;
}

/* Taskbar */
.taskbar {
    display: flex;
    height: 40px;
    background: linear-gradient(90deg, #001722, #000a1c);
    color: #fff;
}

.start {
    width: 48px;
}

.task-search {
    display: flex;
    align-items: center;
    width: 288px;
    padding: 0 9px 0 12px;
    background: #f2f2f2;
    border: 1px solid #cfcfcf;
    color: #222;
    font-size: 14px;
}

.task-search input {
    margin-left: 10px;
}

.task-search input::placeholder {
    color: #222;
    opacity: 1;
}

.narwhal {
    width: 60px;
    height: 34px;
}

.app {
    width: 48px;
}

.apps {
    display: flex;
    gap: 1px;
    margin-left: 3px;
}

.running {
    background: linear-gradient(#76b9ed, #76b9ed) 50% 100% / 40px 3px no-repeat;
}

.running.current {
    background: linear-gradient(#76b9ed, #76b9ed) 50% 100% / 48px 3px no-repeat, #34454f;
}

.tray {
    display: flex;
    margin-left: auto;
}

.tray button {
    width: 24px;
}

.tray time {
    width: 64px;
    padding-top: 2px;
    line-height: 18px;
    text-align: center;
}

.tray .notify {
    width: 40px;
}

.tray .peek {
    width: 5px;
    margin-left: 8px;
    border-left: 1px solid #66727c;
}
```
